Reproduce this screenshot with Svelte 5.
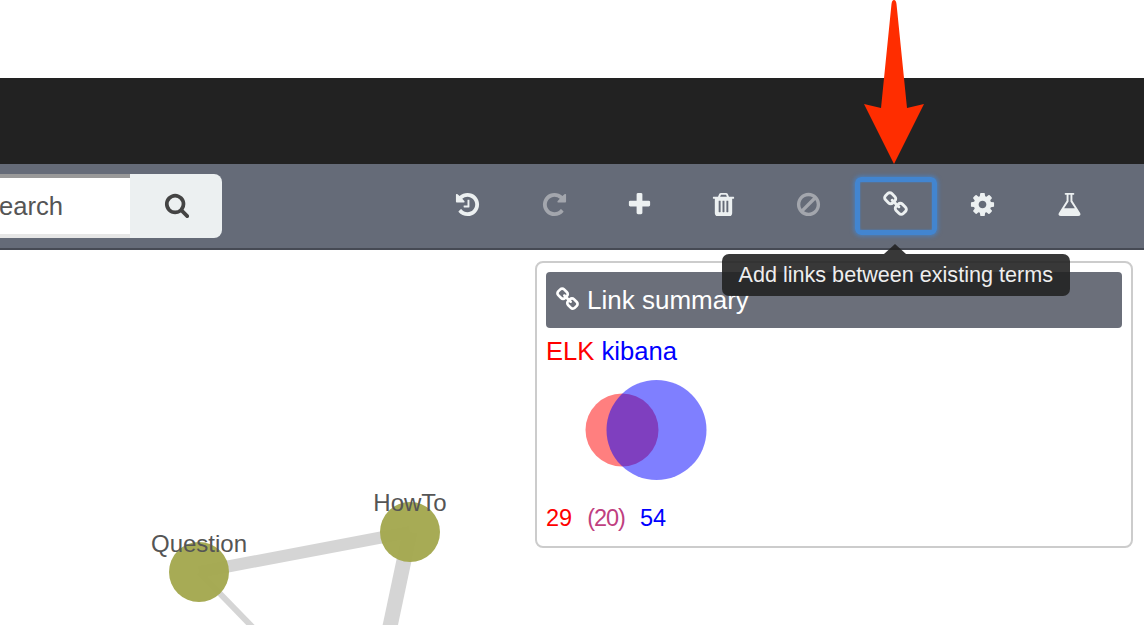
<script>
  const paths = {
    history: "M1664 896q0 156-61 298t-164 245-245 164-298 61q-172 0-327-72.5t-264-204.5q-7-10-6.5-22.5t8.5-20.5l137-138q10-9 25-9 16 2 23 12 73 95 179 147t225 52q104 0 198.5-40.5t163.5-109.5 109.5-163.5 40.5-198.5-40.5-198.5-109.5-163.5-163.5-109.5-198.5-40.5q-98 0-188 35.5t-160 101.5l137 138q31 30 14 69-17 40-59 40h-448q-26 0-45-19t-19-45v-448q0-42 40-59 39-17 69 14l130 129q107-101 244.5-156.5t284.5-55.5q156 0 298 61t245 164 164 245 61 298zm-640-288v448q0 14-9 23t-23 9h-320q-14 0-23-9t-9-23v-64q0-14 9-23t23-9h224v-352q0-14 9-23t23-9h64q14 0 23 9t9 23z",
    repeat: "M1664 256v448q0 26-19 45t-45 19h-448q-42 0-59-40-17-39 14-69l138-138q-148-137-349-137-104 0-198.5 40.5t-163.5 109.5-109.5 163.5-40.5 198.5 40.5 198.5 109.5 163.5 163.5 109.5 198.5 40.5q119 0 225-52t179-147q7-10 23-12 15 0 25 9l137 138q9 8 9.5 20.5t-7.5 22.5q-109 132-264 204.5t-327 72.5q-156 0-298-61t-245-164-164-245-61-298 61-298 164-245 245-164 298-61q147 0 284.5 55.5t244.5 156.5l130-129q29-31 70-14 39 17 39 59z",
    plus: "M1600 736v192q0 40-28 68t-68 28h-416v416q0 40-28 68t-68 28h-192q-40 0-68-28t-28-68v-416h-416q-40 0-68-28t-28-68v-192q0-40 28-68t68-28h416v-416q0-40 28-68t68-28h192q40 0 68 28t28 68v416h416q40 0 68 28t28 68z",
    trash: "M704 1376v-704q0-14-9-23t-23-9h-64q-14 0-23 9t-9 23v704q0 14 9 23t23 9h64q14 0 23-9t9-23zm256 0v-704q0-14-9-23t-23-9h-64q-14 0-23 9t-9 23v704q0 14 9 23t23 9h64q14 0 23-9t9-23zm256 0v-704q0-14-9-23t-23-9h-64q-14 0-23 9t-9 23v704q0 14 9 23t23 9h64q14 0 23-9t9-23zm-544-992h448l-48-117q-7-9-17-11h-317q-10 2-17 11zm928 32v64q0 14-9 23t-23 9h-96v948q0 83-47 143.5t-113 60.5h-832q-66 0-113-58.5t-47-141.5v-952h-96q-14 0-23-9t-9-23v-64q0-14 9-23t23-9h309l70-167q15-37 54-63t79-26h320q40 0 79 26t54 63l70 167h309q14 0 23 9t9 23z",
    ban: "M1440 893q0-161-87-295l-754 753q137 89 297 89 111 0 211.5-43.5t173.5-116.5 116-174.5 43-212.5zm-999 299l755-754q-135-91-300-91-148 0-273 73t-198 199-73 274q0 162 89 299zm1223-299q0 157-61 300t-163.5 246-245 164-298.5 61-298.5-61-245-164-163.5-246-61-300 61-299.5 163.5-245.5 245-164 298.5-61 298.5 61 245 164 163.5 245.5 61 299.5z",
    link: "M1520 1216q0-40-28-68l-208-208q-28-28-68-28-42 0-72 32 3 3 19 18.5t21.5 21.5 15 19 13 25.5 3.5 27.5q0 40-28 68t-68 28q-15 0-27.5-3.5t-25.5-13-19-15-21.5-21.5-18.5-19q-33 31-33 73 0 40 28 68l206 207q27 27 68 27 40 0 68-26l147-146q28-28 28-67zm-703-705q0-40-28-68l-206-207q-28-28-68-28-39 0-68 27l-147 146q-28 28-28 67 0 40 28 68l208 208q27 27 68 27 42 0 72-31-3-3-19-18.5t-21.5-21.5-15-19-13-25.5-3.5-27.5q0-40 28-68t68-28q15 0 27.5 3.5t25.5 13 19 15 21.5 21.5 18.5 19q33-31 33-73zm895 705q0 120-85 203l-147 146q-83 83-203 83-121 0-204-85l-206-207q-83-83-83-203 0-123 88-209l-88-88q-86 88-208 88-120 0-204-84l-208-208q-84-84-84-204t85-203l147-146q83-83 203-83 121 0 204 85l206 207q83 83 83 203 0 123-88 209l88 88q86-88 208-88 120 0 204 84l208 208q84 84 84 204z",
    cog: "M1152 896q0-106-75-181t-181-75-181 75-75 181 75 181 181 75 181-75 75-181zm512-109v222q0 12-8 23t-20 13l-185 28q-19 54-39 91 35 50 107 138 10 12 10 25t-9 23q-27 37-99 108t-94 71q-12 0-26-9l-138-108q-44 23-91 38-16 136-29 186-7 28-36 28h-222q-14 0-24.5-8.5t-11.5-21.5l-28-184q-49-16-90-37l-141 107q-10 9-25 9-14 0-25-11-126-114-165-168-7-10-7-23 0-12 8-23 15-21 51-66.5t54-70.5q-27-50-41-99l-183-27q-13-2-21-12.5t-8-23.5v-222q0-12 8-23t19-13l186-28q14-46 39-92-40-57-107-138-10-12-10-24 0-10 9-23 26-36 98.5-107.5t94.5-71.5q13 0 26 10l138 107q44-23 91-38 16-136 29-186 7-28 36-28h222q14 0 24.5 8.5t11.5 21.5l28 184q49 16 90 37l142-107q9-9 24-9 13 0 25 10 129 119 165 170 7 8 7 22 0 12-8 23-15 21-51 66.5t-54 70.5q26 50 41 98l183 28q13 2 21 12.5t8 23.5z",
    flask: "M1591 1448q56 89 21.5 152.5t-140.5 63.5h-1152q-106 0-140.5-63.5t21.5-152.5l503-793v-399h-64q-26 0-45-19t-19-45 19-45 45-19h512q26 0 45 19t19 45-19 45-45 19h-64v399zm-779-725l-272 429h712l-272-429-20-31v-437h-128v437z",
    search: "M1216 832q0-185-131.5-316.5t-316.5-131.5-316.5 131.5-131.5 316.5 131.5 316.5 316.5 131.5 316.5-131.5 131.5-316.5zm512 832q0 52-38 90t-90 38q-54 0-90-38l-343-342q-179 124-399 124-143 0-273.5-55.5t-225-150-150-225-55.5-273.5 55.5-273.5 150-225 225-150 273.5-55.5 273.5 55.5 225 150 150 225 55.5 273.5q0 220-124 399l343 343q37 37 37 90z"
  }

  // button width follows the glyph advance, like an icon font does
  const tools = [
    { icon: "history", advance: 1536 },
    { icon: "repeat", advance: 1536, disabled: true },
    { icon: "plus", advance: 1408 },
    { icon: "trash", advance: 1408 },
    { icon: "ban", advance: 1536, disabled: true },
    { icon: "link", advance: 1664, focused: true },
    { icon: "cog", advance: 1536 },
    { icon: "flask", advance: 1664 }
  ]
</script>

<div class="page">
  <div class="navbar"></div>

  <div class="toolbar">
    <form class="search">
      <input class="query" placeholder="Search" />
      <button class="go" type="button" aria-label="Search">
        <svg class="icon small" viewBox="0 0 1792 1792"><path d={paths.search} /></svg>
      </button>
    </form>

    <div class="tools">
      {#each tools as tool}
        <button
          class="tool"
          class:disabled={tool.disabled}
          class:focused={tool.focused}
          type="button"
          aria-label={tool.icon}
          style="width: {(tool.advance / 1792) * 27 + 57}px"
        >
          <svg class="icon" viewBox="0 0 1792 1792"><path d={paths[tool.icon]} /></svg>
          {#if tool.focused}
            <span class="tooltip">Add links between existing terms</span>
          {/if}
        </button>
      {/each}
    </div>
  </div>

  <div class="main">
    <svg class="graph" width="1144" height="375" viewBox="0 250 1144 375">
      <line x1="199" y1="572" x2="265" y2="640" stroke="#d5d5d5" stroke-width="6" />
      <line x1="199" y1="572" x2="410" y2="532" stroke="#d5d5d5" stroke-width="12" />
      <line x1="410" y1="532" x2="385" y2="650" stroke="#d5d5d5" stroke-width="15" />
      <circle cx="199" cy="572" r="30" fill="#a4a850" fill-opacity="0.97" />
      <circle cx="410" cy="532" r="30" fill="#a4a850" fill-opacity="0.97" />
      <text x="199" y="552">Question</text>
      <text x="410" y="511">HowTo</text>
    </svg>

    <section class="panel">
      <h3 class="heading">
        <svg class="icon head" viewBox="0 0 1792 1792"><path d={paths.link} /></svg>
        Link summary
      </h3>
      <div class="terms"><span class="red">ELK</span> <span class="blue">kibana</span></div>
      <svg class="venn" width="180" height="104" viewBox="0 0 180 104">
        <circle cx="76" cy="52" r="36.5" fill="#f00" fill-opacity="0.5" />
        <circle cx="110.500" cy="52" r="50" fill="#00f" fill-opacity="0.5" />
      </svg>
      <div class="counts">
        <span class="red">29</span>
        <span class="both">(20)</span>
        <span class="blue">54</span>
      </div>
    </section>
  </div>

  <svg class="arrow" width="64" height="166" viewBox="0 0 64 166">
    <path d="M32 0 Q34 0 34.500 4 L45 108 L62 104 L32 164 L2 104 L19 108 L29.500 4 Q30 0 32 0 Z" fill="#ff2d00" />
  </svg>
</div>

<style>
  :global(body) {
    margin: 0;
    background: #fff;
  }

  .page {
    position: relative;
    width: 1144px;
    height: 625px;
    padding-top: 78px;
    box-sizing: border-box;
    overflow: hidden;
    font-family: "Liberation Sans", Arial, sans-serif;
  }

  .navbar {
    height: 86px;
    background: #222;
  }

  .toolbar {
    display: flex;
    align-items: center;
    justify-content: space-between;
    height: 84px;
    border-bottom: 2px solid #464a54;
    background: #656b78;
  }

  .search {
    display: flex;
    margin-left: -40px;
    height: 64px;
  }

  .query {
    width: 170px;
    padding: 0 0 0 22px;
    box-sizing: border-box;
    border: 0;
    border-top: 4px solid #999;
    border-bottom: 4px solid #e6e6e6;
    background: #fff;
    font: 25.6px "Liberation Sans", Arial, sans-serif;
  }

  .query::placeholder {
    color: #555;
    opacity: 1;
  }

  .go {
    display: flex;
    align-items: center;
    justify-content: center;
    width: 92px;
    padding: 0 0 0 2px;
    border: 0;
    border-radius: 0 8px 8px 0;
    background: #ecf0f1;
    color: #444;
  }

  .tools {
    display: flex;
    align-items: center;
    gap: 6px;
    margin-right: 33px;
  }

  .tool {
    position: relative;
    display: flex;
    align-items: center;
    justify-content: center;
    box-sizing: border-box;
    height: 58px;
    padding: 0;
    border: 5px solid transparent;
    border-radius: 6px;
    background: none;
    color: #ecf0f1;
  }

  .tool.disabled {
    color: #a3a6ad;
  }

  .tool.focused {
    border-color: #4285d0;
    box-shadow: 0 0 4px 1px rgba(66, 135, 215, 0.75), inset 0 0 2px #4285d0;
  }

  .icon {
    width: 27px;
    height: 27px;
    margin-bottom: 3px;
    fill: currentColor;
  }

  .icon.small {
    width: 26px;
    height: 26px;
  }

  .icon.head {
    width: 25px;
    height: 25px;
    margin-bottom: 2px;
  }

  .tooltip {
    position: absolute;
    top: 72px;
    left: -138px;
    z-index: 2;
    box-sizing: border-box;
    width: 348px;
    height: 42px;
    border-radius: 7px;
    background: rgba(34, 34, 34, 0.9);
    color: #eee;
    font-size: 21.6px;
    line-height: 42px;
    text-align: center;
    white-space: nowrap;
  }

  .tooltip::before {
    content: "";
    position: absolute;
    top: -10px;
    left: 162px;
    border-style: solid;
    border-width: 0 11px 10px;
    border-color: transparent transparent rgba(34, 34, 34, 0.9);
  }

  .main {
    position: relative;
    display: flex;
    justify-content: flex-end;
    height: 375px;
    padding: 11px 11px 0 0;
    box-sizing: border-box;
  }

  .graph {
    position: absolute;
    top: 0;
    left: 0;
  }

  .graph text {
    fill: #555;
    font-size: 24px;
    text-anchor: middle;
  }

  .panel {
    position: relative;
    width: 598px;
    height: 287px;
    padding: 9px;
    box-sizing: border-box;
    border: 2px solid #ccc;
    border-radius: 8px;
  }

  .heading {
    display: flex;
    align-items: center;
    gap: 7px;
    height: 56px;
    margin: 0;
    padding-left: 9px;
    border-radius: 4px;
    background: #6b6f7a;
    color: #fff;
    font-size: 26px;
    font-weight: 400;
  }

  .terms {
    margin-top: 8px;
    font-size: 25.6px;
    line-height: 30px;
  }

  .venn {
    display: block;
    margin-top: 12px;
  }

  .counts {
    display: flex;
    gap: 15px;
    margin-top: 21px;
    font-size: 23.5px;
    line-height: 30px;
  }

  .red {
    color: #f00;
  }

  .blue {
    color: #00f;
  }

  .both {
    color: #bf407f;
    letter-spacing: -1px;
  }

  .arrow {
    position: absolute;
    top: 0;
    left: 862px;
    z-index: 3;
  }
</style>
